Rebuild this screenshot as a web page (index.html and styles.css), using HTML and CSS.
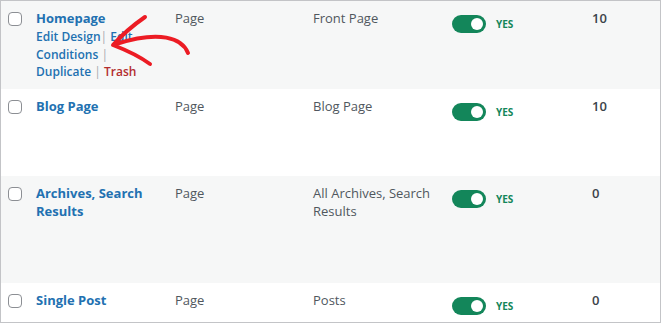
FILE: index.html
```html
<!DOCTYPE html>
<html lang="en">
<head>
<meta charset="utf-8">
<title>Theme Templates</title>
<link rel="stylesheet" href="styles.css">
</head>
<body>
<div class="table">
  <div class="row alt">
    <div class="cb"><span class="box"></span></div>
    <div class="title">
      <a class="name">Homepage</a>
      <div class="actions"><a>Edit Design</a><span class="sep">|</span> <a>Edit Conditions</a> <span class="sep">|</span> <a>Duplicate</a> <span class="sep">|</span> <a class="trash">Trash</a></div>
    </div>
    <div class="cell">Page</div>
    <div class="cell">Front Page</div>
    <div class="status"><span class="toggle"><span class="knob"></span></span><span class="yes">YES</span></div>
    <div class="cell count">10</div>
  </div>
  <div class="row">
    <div class="cb"><span class="box"></span></div>
    <div class="title"><a class="name">Blog Page</a></div>
    <div class="cell">Page</div>
    <div class="cell">Blog Page</div>
    <div class="status"><span class="toggle"><span class="knob"></span></span><span class="yes">YES</span></div>
    <div class="cell count">10</div>
  </div>
  <div class="row alt tall">
    <div class="cb"><span class="box"></span></div>
    <div class="title"><a class="name">Archives, Search Results</a></div>
    <div class="cell">Page</div>
    <div class="cell">All Archives, Search Results</div>
    <div class="status"><span class="toggle"><span class="knob"></span></span><span class="yes">YES</span></div>
    <div class="cell count">0</div>
  </div>
  <div class="row last">
    <div class="cb"><span class="box"></span></div>
    <div class="title"><a class="name">Single Post</a></div>
    <div class="cell">Page</div>
    <div class="cell">Posts</div>
    <div class="status"><span class="toggle"><span class="knob"></span></span><span class="yes">YES</span></div>
    <div class="cell count">0</div>
  </div>
  <svg class="arrow" width="220" height="90" viewBox="0 0 220 90" aria-hidden="true">
    <path d="M188 53 C182 38 160 30 116 44" />
    <path d="M145 17 C132 26 121 36 113 45 C126 50 139 56 150 64" />
  </svg>
</div>
</body>
</html>
```
FILE: styles.css
```css
* { box-sizing: border-box; }
html, body { margin: 0; padding: 0; background: #fff; }
body {
  font-family: "Open Sans", "Noto Sans", sans-serif;
  font-size: 13px;
  line-height: 18px;
  color: #50575e;
}
.table {
  position: relative;
  width: 661px;
  height: 323px;
  border: 1px solid #c3c4c7;
  overflow: hidden;
}
.row {
  display: grid;
  grid-template-columns: 28px 139px 138px 139px 140px 1fr;
  padding: 8px 0 8px 7px;
  min-height: 87px;
  background: #fff;
}
.row.alt { background: #f6f7f7; }
.row.tall { min-height: 107px; }
.cb { padding-top: 3px; }
.box {
  display: block;
  width: 14px;
  height: 14px;
  border: 1px solid #8c8f94;
  border-radius: 4px;
  background: #fff;
}
.title { padding-right: 12px; }
.name {
  display: block;
  color: #2271b1;
  font-weight: 700;
  font-size: 13px;
  line-height: 18px;
}
.actions {
  margin-top: 1px;
  font-size: 12px;
  line-height: 17.5px;
  font-weight: 600;
}
.actions a { color: #2271b1; }
.actions a.trash { color: #b32d2e; }
.sep { color: #a7aaad; font-weight: 400; }
.cell { padding-right: 10px; }
.count { color: #3c434a; font-weight: 600; }
.status {
  display: flex;
  align-items: center;
  gap: 10px;
  height: 18px;
  margin-top: 6px;
}
.toggle {
  position: relative;
  display: block;
  width: 34px;
  height: 18px;
  border-radius: 9px;
  background: #13865a;
}
.knob {
  position: absolute;
  top: 3px;
  right: 3px;
  width: 12px;
  height: 12px;
  border-radius: 50%;
  background: #fff;
}
.yes {
  color: #13865a;
  font-size: 10px;
  font-weight: 700;
  line-height: 12px;
}
.arrow {
  position: absolute;
  left: -1px;
  top: -1px;
  pointer-events: none;
}
.arrow path {
  fill: none;
  stroke: #ec1c24;
  stroke-width: 4;
  stroke-linecap: round;
  stroke-linejoin: round;
}
```
